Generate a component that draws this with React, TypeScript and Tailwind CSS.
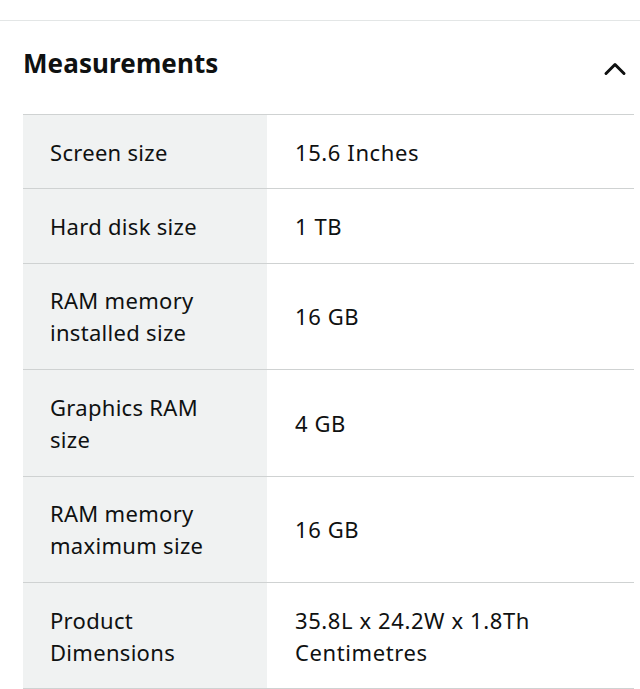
import { ChevronUp } from 'lucide-react';

const rows: [string[], string[]][] = [
  [['Screen size'], ['15.6 Inches']],
  [['Hard disk size'], ['1 TB']],
  [['RAM memory', 'installed size'], ['16 GB']],
  [['Graphics RAM', 'size'], ['4 GB']],
  [['RAM memory', 'maximum size'], ['16 GB']],
  [['Product', 'Dimensions'], ['35.8L x 24.2W x 1.8Th', 'Centimetres']],
];

export default function App() {
  return (
    <div className="w-[640px] h-[689px] overflow-hidden bg-white text-[#0f1111] font-['Noto_Sans',sans-serif]">
      <div className="h-5" />
      <div className="border-t border-[#e3e6e6]" />
      <div className="flex items-center justify-between pl-[23px] pr-[7px] pt-[18px] pb-[27px]">
        <h2 className="text-[26px] font-bold leading-[36px] tracking-[0.1px]">Measurements</h2>
        <ChevronUp className="w-[36px] h-[36px] mt-[12px]" strokeWidth={2} />
      </div>
      <div className="ml-[23px] w-[611px] border-t border-[#cfd2d2]">
        {rows.map(([k, v]) => (
          <div key={k.join(' ')} className="flex border-b border-[#cfd2d2]">
            <div className="w-[244px] shrink-0 bg-[#f0f2f2] pl-[27px] pr-3 py-[20.7px] text-[22px] leading-[32px] tracking-[0.3px]">
              {k.map((l) => (
                <div key={l}>{l}</div>
              ))}
            </div>
            <div className="flex-1 flex items-center pl-[28px] pr-3 py-[20.7px] text-[22px] leading-[32px] tracking-[0.6px]">
              <div>
                {v.map((l) => (
                  <div key={l}>{l}</div>
                ))}
              </div>
            </div>
          </div>
        ))}
      </div>
    </div>
  );
}
